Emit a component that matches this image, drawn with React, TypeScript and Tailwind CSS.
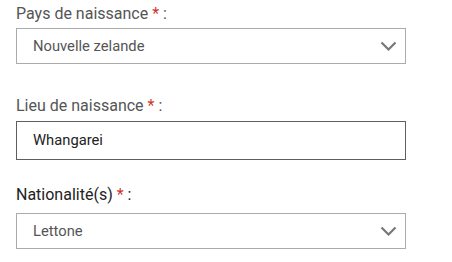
function Chevron() {
  return (
    <svg width="17" height="11" viewBox="0 0 17 11" className="shrink-0">
      <polyline
        points="1.5,1.5 8.5,8.5 15.5,1.5"
        fill="none"
        stroke="#777"
        strokeWidth="2.2"
      />
    </svg>
  )
}

function Label({ text, dark, className }: { text: string; dark?: boolean; className: string }) {
  return (
    <div
      className={`text-[16px] leading-[20px] ${dark ? 'text-[#222]' : 'text-[#555]'} ${className}`}
    >
      {text} <span className="text-[#d0342c]">*</span> :
    </div>
  )
}

function SelectBox({ value }: { value: string }) {
  return (
    <div className="flex h-[36px] w-[390px] items-center justify-between border border-[#ababab] bg-white pl-4 pr-[8px]">
      <span className="text-[14.75px] text-[#555]">{value}</span>
      <Chevron />
    </div>
  )
}

export default function App() {
  return (
    <div
      className="flex h-[262px] w-[452px] flex-col bg-white pl-4"
      style={{ fontFamily: 'Roboto, "Liberation Sans", sans-serif' }}
    >
      <Label text="Pays de naissance" className="mt-[4px] mb-[4px]" />
      <SelectBox value="Nouvelle zelande" />

      <Label text="Lieu de naissance" className="mt-[32px] mb-[5px]" />
      <div className="flex h-[39px] w-[390px] items-center border border-[#5f5f5f] bg-white pl-4">
        <span className="text-[14.75px] text-[#222]">Whangarei</span>
      </div>

      <Label text="Nationalité(s)" dark className="mt-[25px] mb-[8px]" />
      <SelectBox value="Lettone" />
    </div>
  )
}
